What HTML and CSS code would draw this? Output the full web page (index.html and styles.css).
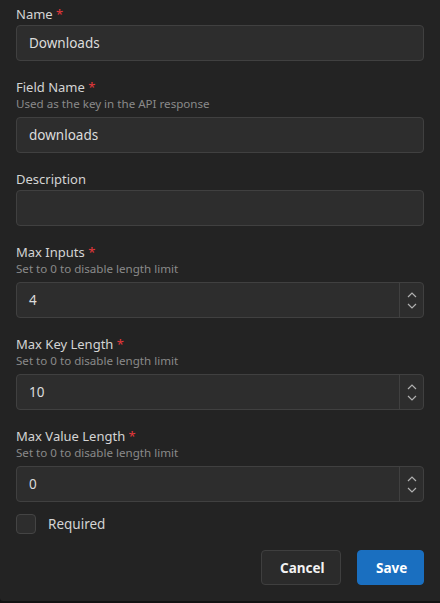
FILE: index.html
```html
<!DOCTYPE html>
<html>
<head>
<meta charset="utf-8">
<link rel="stylesheet" href="styles.css">
</head>
<body>
<div class="dialog">
  <form class="form">
    <div class="field">
      <label class="label">Name <span class="req">*</span></label>
      <div class="input"><span class="value">Downloads</span></div>
    </div>
    <div class="field">
      <label class="label">Field Name <span class="req">*</span></label>
      <div class="hint">Used as the key in the API response</div>
      <div class="input"><span class="value">downloads</span></div>
    </div>
    <div class="field">
      <label class="label">Description</label>
      <div class="input"><span class="value"></span></div>
    </div>
    <div class="field">
      <label class="label">Max Inputs <span class="req">*</span></label>
      <div class="hint">Set to 0 to disable length limit</div>
      <div class="input number"><span class="value">4</span>
        <div class="spin"><svg width="10" height="6" viewBox="0 0 10 6"><path d="M1 5 L5 1 L9 5" fill="none" stroke="#b0b0b0" stroke-width="1.2"/></svg><svg width="10" height="6" viewBox="0 0 10 6"><path d="M1 1 L5 5 L9 1" fill="none" stroke="#b0b0b0" stroke-width="1.2"/></svg></div>
      </div>
    </div>
    <div class="field">
      <label class="label">Max Key Length <span class="req">*</span></label>
      <div class="hint">Set to 0 to disable length limit</div>
      <div class="input number"><span class="value">10</span>
        <div class="spin"><svg width="10" height="6" viewBox="0 0 10 6"><path d="M1 5 L5 1 L9 5" fill="none" stroke="#b0b0b0" stroke-width="1.2"/></svg><svg width="10" height="6" viewBox="0 0 10 6"><path d="M1 1 L5 5 L9 1" fill="none" stroke="#b0b0b0" stroke-width="1.2"/></svg></div>
      </div>
    </div>
    <div class="field">
      <label class="label">Max Value Length <span class="req">*</span></label>
      <div class="hint">Set to 0 to disable length limit</div>
      <div class="input number"><span class="value">0</span>
        <div class="spin"><svg width="10" height="6" viewBox="0 0 10 6"><path d="M1 5 L5 1 L9 5" fill="none" stroke="#b0b0b0" stroke-width="1.2"/></svg><svg width="10" height="6" viewBox="0 0 10 6"><path d="M1 1 L5 5 L9 1" fill="none" stroke="#b0b0b0" stroke-width="1.2"/></svg></div>
      </div>
    </div>
    <div class="check">
      <span class="box"></span>
      <span class="check-label">Required</span>
    </div>
    <div class="actions">
      <button type="button" class="btn cancel">Cancel</button>
      <button type="button" class="btn save">Save</button>
    </div>
  </form>
</div>
</body>
</html>
```
FILE: styles.css
```css
html, body {
  margin: 0;
  padding: 0;
  background: #121212;
}
body {
  font-family: "Noto Sans", "Open Sans", sans-serif;
  color: #d6d6d6;
}
.dialog {
  width: 440px;
  height: 601px;
  background: #232323;
  border-bottom-left-radius: 3px;
  box-sizing: border-box;
  padding: 4px 16px 0 16px;
}
.form {
  display: flex;
  flex-direction: column;
}
.field {
  display: flex;
  flex-direction: column;
  margin-bottom: 16px;
}
.label {
  font-size: 13px;
  line-height: 20px;
  color: #d4d4d4;
  margin-bottom: 1px;
}
.req {
  color: #e5383b;
}
.hint {
  font-size: 11.6px;
  line-height: 14px;
  color: #8a8a8a;
  margin-top: -1px;
  margin-bottom: 6px;
}
.input {
  height: 36px;
  box-sizing: border-box;
  background: #2d2d2d;
  border: 1px solid #404040;
  border-radius: 4px;
  display: flex;
  align-items: center;
  padding-left: 12px;
  font-size: 13.5px;
  color: #dcdcdc;
}
.input .value {
  flex: 1;
}
.number {
  padding-right: 0;
}
.spin {
  width: 24px;
  height: 100%;
  border-left: 1px solid #404040;
  display: flex;
  flex-direction: column;
  align-items: center;
  justify-content: space-around;
  padding: 6px 0;
  box-sizing: border-box;
}
.spin svg {
  display: block;
}
.check {
  display: flex;
  align-items: center;
  gap: 12px;
  margin-top: -4px;
}
.box {
  width: 20px;
  height: 20px;
  box-sizing: border-box;
  border: 1px solid #444;
  background: #2d2d2d;
  border-radius: 4px;
}
.check-label {
  font-size: 13.5px;
  color: #d4d4d4;
}
.actions {
  display: flex;
  justify-content: flex-end;
  gap: 16px;
  margin-top: 16px;
}
.btn {
  height: 35px;
  border-radius: 4px;
  font-family: inherit;
  font-size: 13.5px;
  font-weight: 700;
  color: #f2f2f2;
  padding: 0 18px;
  cursor: pointer;
}
.cancel {
  width: 80px;
  background: #2b2b2b;
  border: 1px solid #3f3f3f;
}
.save {
  width: 67px;
  background: #1a6fc0;
  border: 1px solid #1a6fc0;
  color: #ffffff;
}
```
